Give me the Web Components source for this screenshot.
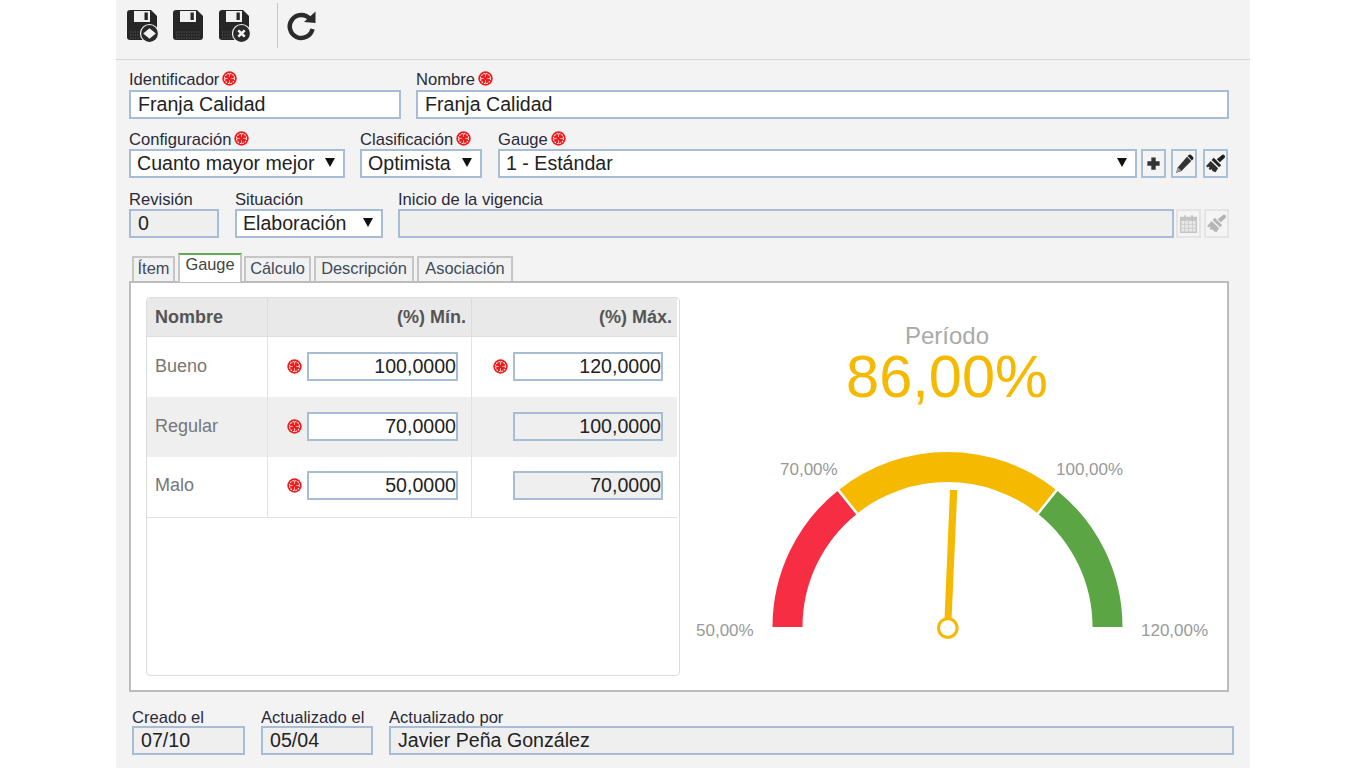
<!DOCTYPE html>
<html lang="es">
<head>
<meta charset="utf-8">
<title>Franja Calidad</title>
<style>
  html, body { margin: 0; padding: 0; background: #fff; }
  body { font-family: "Liberation Sans", Arial, sans-serif; color: #222; overflow: hidden; }
</style>
</head>
<body>
<sa-form>
  <sa-toolbar slot="toolbar">
    <sa-tool icon="save-new"></sa-tool>
    <sa-tool icon="save"></sa-tool>
    <sa-tool icon="save-close"></sa-tool>
    <sa-tool icon="refresh" divider></sa-tool>
  </sa-toolbar>

  <sa-row>
    <sa-field label="Identificador" required style="width:272px"><sa-input value="Franja Calidad"></sa-input></sa-field>
    <sa-field label="Nombre" required style="flex:1"><sa-input value="Franja Calidad"></sa-input></sa-field>
  </sa-row>

  <sa-row style="margin-bottom:11px;--label-pad:2px">
    <sa-field label="Configuración" required style="width:216px"><sa-select value="Cuanto mayor mejor"></sa-select></sa-field>
    <sa-field label="Clasificación" required style="width:122px;margin-right:1px"><sa-select value="Optimista"></sa-select></sa-field>
    <sa-field label="Gauge" required style="flex:1">
      <sa-inline>
        <sa-select value="1 - Estándar" style="flex:1"></sa-select>
        <sa-icon-btn icon="plus" style="margin-left:4px"></sa-icon-btn>
        <sa-icon-btn icon="pencil" style="margin-left:5px;width:26px"></sa-icon-btn>
        <sa-icon-btn icon="brush" style="margin:0 1px 0 6px"></sa-icon-btn>
      </sa-inline>
    </sa-field>
  </sa-row>

  <sa-row style="--label-pad:2px">
    <sa-field label="Revisión" style="width:90px;margin-right:1px"><sa-input value="0" readonly></sa-input></sa-field>
    <sa-field label="Situación" style="width:148px"><sa-select value="Elaboración"></sa-select></sa-field>
    <sa-field label="Inicio de la vigencia" style="flex:1">
      <sa-inline>
        <sa-input readonly style="flex:1"></sa-input>
        <sa-icon-btn icon="calendar" disabled style="margin-left:2px"></sa-icon-btn>
        <sa-icon-btn icon="brush" disabled style="margin-left:3px"></sa-icon-btn>
      </sa-inline>
    </sa-field>
  </sa-row>

  <sa-tabs slot="tabs" active="Gauge" items="Ítem,Gauge,Cálculo,Descripción,Asociación">
    <sa-limits>
      <sa-limit name="Bueno" min="100,0000" max="120,0000"></sa-limit>
      <sa-limit name="Regular" min="70,0000" max="100,0000" locked shaded></sa-limit>
      <sa-limit name="Malo" min="50,0000" max="70,0000" locked style="--cell-pad:4px"></sa-limit>
    </sa-limits>
    <sa-gauge value="86" title="Período"></sa-gauge>
  </sa-tabs>

  <sa-footer slot="footer">
    <sa-field label="Creado el" style="width:113px"><sa-input value="07/10" readonly></sa-input></sa-field>
    <sa-field label="Actualizado el" style="width:112px"><sa-input value="05/04" readonly></sa-input></sa-field>
    <sa-field label="Actualizado por" style="flex:1"><sa-input value="Javier Peña González" readonly></sa-input></sa-field>
  </sa-footer>
</sa-form>

<script>
const ICONS = {
  plus: '<path d="M9.500 5h5v4.500H19v5h-4.500V19h-5v-4.500H5v-5h4.500z" fill="#333"/>',
  pencil: '<path d="M14.800 4.200l5 5L8.500 20.500 2.500 22.500l2-6.300z" fill="#333"/><path d="M16.500 2.500c1-1 2.300-1 3.300 0l1.700 1.700c1 1 1 2.300 0 3.300L20.500 8.500l-5-5z" fill="#1f1f1f"/><path d="M4.500 16.200l3.800 3.800-5.800 2.500z" fill="#999"/>',
  brush: '<path d="M13.500 7l3.500 3.500 5.200-4.900c1-1 .9-2.200 0-3.100s-2.100-.9-3 0z" fill="#1f1f1f"/><path d="M10 5.500l8.500 8.500-2.400 2.400L7.600 7.900z" fill="#222"/><path d="M6.500 9l8.500 8.500-3 4.500-3.500-1.500-1-2.200-1.500 1.200-1.800-1.200 1-2-1.500-.7-1.500 1L1.500 14.500z" fill="#2e2e2e"/>',
  calendar: '<path d="M3 5h18v17H3z" fill="#e8e8e8" stroke="#c4c4c4" stroke-width="1.500"/><path d="M3 5h18v4H3z" fill="#c4c4c4"/><path d="M7 2.500h2v4H7zM15 2.500h2v4h-2z" fill="#c4c4c4"/><path d="M3 13h18M3 17.500h18M7.500 9v13M12 9v13M16.500 9v13" stroke="#ccc" stroke-width="1"/>'
};

// floppy disk shared by the three save buttons of the toolbar
const FLOPPY = `
  <path d="M3 0H24L30 6V27c0 2-1.200 3-3 3H3c-1.900 0-3-1.100-3-3V3c0-1.800 1.100-3 3-3z" fill="#262626"/>
  <path d="M7 1h16v11H7z" fill="#f1f1f1"/>
  <path d="M17.500 2.500h3.300v7.500h-3.300z" fill="#262626"/>
  <path d="M3 22h24M3 25h24M3 28h24" stroke="#5c5c5c" stroke-width="1.200" stroke-dasharray="1.200 1.300"/>`;

const BADGE = `<circle cx="22.500" cy="23.500" r="9" fill="#2a2a2a" stroke="#f3f3f3" stroke-width="1.200"/>`;

const TOOL_ICONS = {
  'save': FLOPPY,
  'save-new': FLOPPY + BADGE + `<path d="M22.500 18.300l6.300 5.200-6.300 5.200-6.300-5.200z" fill="#f3f3f3"/>`,
  'save-close': FLOPPY + BADGE + `<path d="M19.300 20.300l6.400 6.400M25.700 20.300l-6.400 6.400" stroke="#f3f3f3" stroke-width="2.600"/>`,
  'refresh': `<path d="M24 9A11.500 11.500 0 1 0 26.500 19" fill="none" stroke="#2b2b2b" stroke-width="4.500"/>
    <path d="M18 12L29.500 1.500v11.500z" fill="#2b2b2b"/>`
};

class SaForm extends HTMLElement {
  constructor() {
    super();
    this.attachShadow({mode: 'open'}).innerHTML = `
      <style>
        :host { display: block; width: 1134px; height: 768px; margin: 0 auto 0 116px; background: #f3f3f3; overflow: hidden; }
        .rows { display: flex; flex-direction: column; padding: 10px 21px 0 13px; }
      </style>
      <slot name="toolbar"></slot>
      <div class="rows"><slot></slot><slot name="tabs"></slot></div>
      <slot name="footer"></slot>`;
  }
}

class SaToolbar extends HTMLElement {
  constructor() {
    super();
    this.attachShadow({mode: 'open'}).innerHTML = `
      <style>
        :host { display: flex; align-items: flex-start; height: 59px; padding-left: 11px; border-bottom: 1px solid #d6d6d6; box-sizing: content-box; }
      </style>
      <slot></slot>`;
  }
}

class SaTool extends HTMLElement {
  constructor() {
    super();
    this.attachShadow({mode: 'open'});
  }
  connectedCallback() {
    const name = this.getAttribute('icon');
    this.shadowRoot.innerHTML = `
      <style>
        :host { display: flex; width: 46px; height: 59px; padding-top: 10px; box-sizing: border-box; }
        :host([icon="save-close"]) { width: 58px; }
        :host([divider]) { width: auto; padding-top: 10px; }
        :host([divider])::before { content: ""; display: block; width: 1px; height: 45px; margin: -7px 8px 0 0; background: #c4c4c4; }
      </style>
      <svg width="33" height="33" viewBox="0 0 33 33">${TOOL_ICONS[name]}</svg>`;
  }
}

class SaRow extends HTMLElement {
  constructor() {
    super();
    this.attachShadow({mode: 'open'}).innerHTML = `
      <style>:host { display: flex; gap: 15px; margin-bottom: 10px; }</style>
      <slot></slot>`;
  }
}

class SaInline extends HTMLElement {
  constructor() {
    super();
    this.attachShadow({mode: 'open'}).innerHTML = `
      <style>:host { display: flex; align-items: stretch; }</style>
      <slot></slot>`;
  }
}

class SaReq extends HTMLElement {
  constructor() {
    super();
    this.attachShadow({mode: 'open'}).innerHTML = `
      <style>:host { display: inline-flex; width: 15px; height: 15px; }</style>
      <svg width="15" height="15" viewBox="0 0 15 15">
        <circle cx="7.500" cy="7.500" r="7.200" fill="#f01c1c"/>
        <circle cx="7.500" cy="7.500" r="5" fill="none" stroke="#fff" stroke-width="1.100" stroke-dasharray="1.600 1"/>
        <path d="M7.500 2.500v10M2.500 7.500h10" stroke="#ffb5b5" stroke-width="1"/>
        <circle cx="7.500" cy="7.500" r="1.800" fill="#f01c1c"/>
      </svg>`;
  }
}

class SaField extends HTMLElement {
  constructor() {
    super();
    this.attachShadow({mode: 'open'});
  }
  connectedCallback() {
    this.shadowRoot.innerHTML = `
      <style>
        :host { display: flex; flex-direction: column; min-width: 0; }
        .label { display: flex; align-items: center; gap: 3px; box-sizing: border-box; height: 20px; padding-top: var(--label-pad, 0); font-size: 16.600px; color: #2a2a3a; white-space: nowrap; }
        .label sa-req { margin-top: -3px; }
      </style>
      <div class="label">${this.getAttribute('label')}${this.hasAttribute('required') ? '<sa-req></sa-req>' : ''}</div>
      <slot></slot>`;
  }
}

class SaInput extends HTMLElement {
  constructor() {
    super();
    this.attachShadow({mode: 'open'});
  }
  connectedCallback() {
    this.shadowRoot.innerHTML = `
      <style>
        :host { display: block; box-sizing: border-box; height: 29px; padding: 0 8px 0 7px; line-height: 25.500px; font-size: 19.600px;
          color: #222; background: #fff; border: 2px solid #a6bdd5; white-space: nowrap; overflow: hidden; }
        :host([readonly]) { background: #efefef; }
        :host([align="right"]) { text-align: right; padding: 0; }
      </style>${this.getAttribute('value') || ''}`;
  }
}

class SaSelect extends HTMLElement {
  constructor() {
    super();
    this.attachShadow({mode: 'open'});
  }
  connectedCallback() {
    this.shadowRoot.innerHTML = `
      <style>
        :host { display: flex; align-items: center; box-sizing: border-box; height: 29px; padding: 0 8px 0 6px; font-size: 19.600px;
          color: #222; background: #fff; border: 2px solid #a6bdd5; white-space: nowrap; overflow: hidden; }
        .v { flex: 1; }
        .arrow { flex: none; width: 0; height: 0; border: 5px solid transparent; border-top: 9px solid #111; border-bottom: 0; margin-top: -2px; }
      </style><span class="v">${this.getAttribute('value')}</span><span class="arrow"></span>`;
  }
}

class SaIconBtn extends HTMLElement {
  constructor() {
    super();
    this.attachShadow({mode: 'open'});
  }
  connectedCallback() {
    const faded = this.hasAttribute('disabled') && this.getAttribute('icon') == 'brush';
    this.shadowRoot.innerHTML = `
      <style>
        :host { display: flex; align-items: center; justify-content: center; box-sizing: border-box; width: 25px; height: 29px;
          background: #f4f4f4; border: 2px solid #a9c0d6; }
        :host([disabled]) { border-color: #e4e4e4; }
      </style>
      <svg width="21" height="23" viewBox="0 0 24 24" style="${faded ? 'opacity:.3' : ''}">${ICONS[this.getAttribute('icon')]}</svg>`;
  }
}

class SaTabs extends HTMLElement {
  constructor() {
    super();
    this.attachShadow({mode: 'open'});
  }
  connectedCallback() {
    const active = this.getAttribute('active');
    const widths = {'Ítem': 43, 'Gauge': 64, 'Cálculo': 67, 'Descripción': 100, 'Asociación': 96};
    const tabs = this.getAttribute('items').split(',').map(t =>
      `<div class="tab${t == active ? ' on' : ''}" style="width:${widths[t]}px">${t}</div>`).join('');
    this.shadowRoot.innerHTML = `
      <style>
        :host { display: block; margin-top: 6px; }
        .bar { display: flex; align-items: flex-end; gap: 3px; padding-left: 3px; height: 27px; position: relative; z-index: 1; }
        .tab { box-sizing: border-box; height: 25px; text-align: center; line-height: 20px; font-size: 16.400px; color: #3d4a5a;
          background: #f1f1f1; border: 2px solid #c6c6c6; border-bottom: 0; }
        .on { height: 29px; line-height: 19px; background: #fff; color: #444; border-top: 2px solid #5cae4f; margin: 0 -1px -1px 0; }
        .panel { display: flex; align-items: flex-start; box-sizing: border-box; height: 411px; padding: 14px 0 0 15px;
          background: #fff; border: 2px solid #bcbcbc; }
      </style>
      <div class="bar">${tabs}</div>
      <div class="panel"><slot></slot></div>`;
  }
}

class SaLimits extends HTMLElement {
  constructor() {
    super();
    this.attachShadow({mode: 'open'}).innerHTML = `
      <style>
        :host { display: block; box-sizing: border-box; width: 534px; height: 379px; background: #fff; border: 1.500px solid #dcdcdc; border-radius: 4px; overflow: hidden; }
        .head { display: grid; grid-template-columns: 120px 204px 206px; width: 530px; height: 38px; line-height: 39px; background: #e9e9e9; font-size: 18px; font-weight: bold;
          color: #555; border-bottom: 1.500px solid #dedede; }
        .head div { padding: 0 8px; border-left: 1px solid #dcdcdc; }
        .head div.n { border-left: 0; }
        .head div.r { text-align: right; padding-right: 5px; }
        .body { width: 530px; border-bottom: 1.500px solid #e2e2e2; }
      </style>
      <div class="head"><div class="n">Nombre</div><div class="r">(%) Mín.</div><div class="r">(%) Máx.</div></div>
      <div class="body"><slot></slot></div>`;
  }
}

class SaLimit extends HTMLElement {
  constructor() {
    super();
    this.attachShadow({mode: 'open'});
  }
  connectedCallback() {
    const locked = this.hasAttribute('locked');
    this.shadowRoot.innerHTML = `
      <style>
        :host { display: grid; grid-template-columns: 120px 204px 206px; height: 60px; font-size: 18px; color: #777; }
        :host([shaded]) { background: #efefef; }
        .c { display: flex; align-items: center; box-sizing: border-box; padding-bottom: var(--cell-pad, 2px); border-left: 1px solid #e2e2e2; }
        .c.n { padding-left: 8px; border-left: 0; }
        .num { justify-content: flex-end; gap: 5px; padding-right: 13px; }
        .num.last { padding-right: 14px; }
        sa-input { width: 151px; }
        .last sa-input { width: 150px; }
      </style>
      <div class="c n">${this.getAttribute('name')}</div>
      <div class="c num"><sa-req></sa-req><sa-input align="right" value="${this.getAttribute('min')}"></sa-input></div>
      <div class="c num last">${locked ? '' : '<sa-req></sa-req>'}<sa-input align="right" ${locked ? 'readonly' : ''} value="${this.getAttribute('max')}"></sa-input></div>`;
  }
}

class SaGauge extends HTMLElement {
  constructor() {
    super();
    this.attachShadow({mode: 'open'});
  }
  // angle goes from 0 (left end, 50%) to 180 (right end, 120%)
  band(from, to, color) {
    const cx = 947.5, cy = 627, R = 175, r = 145;
    const pt = (rad, a) => {
      const t = a * Math.PI / 180;
      return (cx - rad * Math.cos(t)).toFixed(2) + ' ' + (cy - rad * Math.sin(t)).toFixed(2);
    };
    return `<path d="M${pt(R, from)}A${R} ${R} 0 0 1 ${pt(R, to)}L${pt(r, to)}A${r} ${r} 0 0 0 ${pt(r, from)}Z" fill="${color}"/>`;
  }
  connectedCallback() {
    const a = v => (v - 50) / 70 * 180;
    const sep = v => {
      const t = a(v) * Math.PI / 180;
      const p = rad => `${947.5 - rad * Math.cos(t)} ${627 - rad * Math.sin(t)}`;
      return `<path d="M${p(143)}L${p(177)}" stroke="#fff" stroke-width="2.500"/>`;
    };
    this.shadowRoot.innerHTML = `
      <style>
        :host { display: block; width: 530px; height: 379px; margin-left: 10px; }
        text { font-family: "Liberation Sans", Arial, sans-serif; }
        .tick { font-size: 17px; fill: #999; }
      </style>
      <svg width="530" height="379" viewBox="690 297 530 379">
        <text x="947" y="344" text-anchor="middle" font-size="24" fill="#a9a9a9">${this.getAttribute('title')}</text>
        <text x="947" y="397" text-anchor="middle" font-size="59.500" fill="#f5b900">86,00%</text>
        ${this.band(0, a(70), '#f62d43')}${this.band(a(70), a(100), '#f5b900')}${this.band(a(100), 180, '#5ba545')}
        ${sep(70)}${sep(100)}
        <polygon points="950,490 957.300,490 951.500,620 944.500,620" fill="#f5b900"/>
        <circle cx="947.800" cy="628" r="9.300" fill="#fff" stroke="#f5b900" stroke-width="3"/>
        <text class="tick" x="780" y="475">70,00%</text>
        <text class="tick" x="1056" y="475">100,00%</text>
        <text class="tick" x="696" y="636">50,00%</text>
        <text class="tick" x="1141" y="636">120,00%</text>
      </svg>`;
  }
}

class SaFooter extends HTMLElement {
  constructor() {
    super();
    this.attachShadow({mode: 'open'}).innerHTML = `
      <style>:host { display: flex; gap: 16px; padding: 14px 16px 0 16px; --label-pad: 4px; }</style>
      <slot></slot>`;
  }
}

customElements.define('sa-form', SaForm);
customElements.define('sa-toolbar', SaToolbar);
customElements.define('sa-tool', SaTool);
customElements.define('sa-row', SaRow);
customElements.define('sa-inline', SaInline);
customElements.define('sa-req', SaReq);
customElements.define('sa-field', SaField);
customElements.define('sa-input', SaInput);
customElements.define('sa-select', SaSelect);
customElements.define('sa-icon-btn', SaIconBtn);
customElements.define('sa-tabs', SaTabs);
customElements.define('sa-limits', SaLimits);
customElements.define('sa-limit', SaLimit);
customElements.define('sa-gauge', SaGauge);
customElements.define('sa-footer', SaFooter);
</script>
</body>
</html>
